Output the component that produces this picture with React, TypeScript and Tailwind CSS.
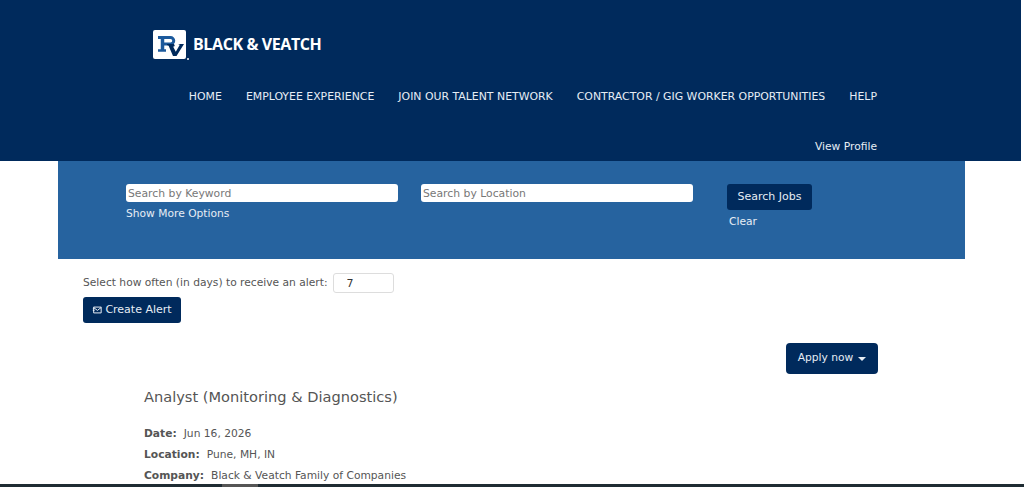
const font = { fontFamily: '"DejaVu Sans", Verdana, sans-serif' };

const navItems = ["HOME", "EMPLOYEE EXPERIENCE", "JOIN OUR TALENT NETWORK", "CONTRACTOR / GIG WORKER OPPORTUNITIES", "HELP"];

function Logo() {
  return (
    <div className="flex items-center">
      <div className="relative h-[29px] w-[33px] rounded-[2px] bg-white">
        <svg viewBox="0 0 33 29" className="h-full w-full">
          <g fill="none" stroke="#1c5a9c">
            <path d="M5 7.500H17.500a3 3 0 0 1 0 6.500H9" strokeWidth="3" />
            <path d="M9.500 7.500V20" strokeWidth="3.500" />
            <path d="M5 20.500H13" strokeWidth="2.500" />
          </g>
          <path d="M14 14h7l.8 2-1.600.8 2.600 5 4-7-1.800-.8h6l-7.500 12h-3.500l-4.500-10.500-1.500-.5z" fill="#002a5c" />
        </svg>
        <span className="absolute bottom-[-1px] right-[-3px] h-[2px] w-[2px] rounded-full bg-white" />
      </div>
      <span className="mb-[2px] ml-[7px] text-[16px] font-bold tracking-[-0.4px] text-white" style={{ fontFamily: '"Open Sans", sans-serif' }}>
        BLACK &amp; VEATCH
      </span>
    </div>
  );
}

export default function App() {
  return (
    <div className="relative h-[487px] w-[1024px] overflow-hidden bg-white text-[10.7px] text-[#555]" style={font}>
      <header className="h-[161px] w-[1021px] bg-[#002a5c] pt-[30px] text-[#e6edf5]">
        <div className="pl-[153px]">
          <Logo />
        </div>
        <nav className="mt-[30px] flex justify-end gap-[24px] pr-[144px] text-[10.9px] leading-[16px]">
          {navItems.map((item) => (
            <a key={item}>{item}</a>
          ))}
        </nav>
        <div className="mt-[34px] pr-[144px] text-right leading-[16px]">View Profile</div>
      </header>

      <section className="mx-[58px] flex h-[98px] w-[907px] bg-[#26639f] pl-[68px] pt-[23px] text-[#e6edf5]">
        <div className="w-[295px]">
          <input
            readOnly
            placeholder="Search by Keyword"
            className="block h-[18px] w-[272px] rounded-[3px] bg-white px-[2px] text-[10.8px] placeholder:text-[#777]"
          />
          <div className="mt-[4px] leading-[16px]">Show More Options</div>
        </div>
        <div className="w-[306px]">
          <input
            readOnly
            placeholder="Search by Location"
            className="block h-[18px] w-[272px] rounded-[3px] bg-white px-[2px] text-[10.8px] placeholder:text-[#777]"
          />
        </div>
        <div>
          <button className="h-[26px] w-[85px] rounded-[3px] bg-[#002a5c] text-[11px] text-[#e6edf5]">Search Jobs</button>
          <div className="mt-[4px] pl-[2px] leading-[16px]">Clear</div>
        </div>
      </section>

      <section className="pl-[83px] pt-[14px]">
        <div className="flex items-center">
          <span>Select how often (in days) to receive an alert:</span>
          <input readOnly value="7" className="ml-[5px] h-[20px] w-[61px] rounded-[3px] border border-[#ddd] pl-[13px] text-[11px] text-[#333]" />
        </div>
        <button className="mt-[4px] flex h-[26px] w-[98px] items-center justify-center gap-[3px] rounded-[3px] bg-[#002a5c] text-[11px] text-[#e6edf5]">
          <svg viewBox="0 0 12 9" className="h-[8px] w-[10px]" fill="none" stroke="currentColor" strokeWidth="1.2">
            <path d="M2 1h9v7H2zM1 3h2M1 5h2M2 1.500l4.500 3.500 4.500-3.500" />
          </svg>
          Create Alert
        </button>
      </section>

      <div className="flex justify-end pr-[146px] pt-[20px]">
        <button className="flex h-[31px] w-[92px] items-center justify-center gap-[5px] rounded-[4px] bg-[#002a5c] text-[10.7px] text-[#e6edf5]">
          Apply now
          <span className="mt-[1px] h-0 w-0 border-x-[4px] border-t-[4px] border-x-transparent border-t-[#e6edf5]" />
        </button>
      </div>

      <main className="pl-[144px] pt-[13px]">
        <h1 className="text-[14.600px] leading-[20px] text-[#555]">Analyst (Monitoring &amp; Diagnostics)</h1>
        <div className="mt-[16px] leading-[21px]">
          <p><b className="mr-[7px]">Date:</b>Jun 16, 2026</p>
          <p><b className="mr-[7px]">Location:</b>Pune, MH, IN</p>
          <p><b className="mr-[7px]">Company:</b>Black &amp; Veatch Family of Companies</p>
        </div>
      </main>

      <div className="absolute inset-x-0 bottom-0 h-[3px] bg-[#1f2c33]">
        <div className="ml-[222px] h-full w-[36px] bg-[#555]" />
      </div>
    </div>
  );
}
